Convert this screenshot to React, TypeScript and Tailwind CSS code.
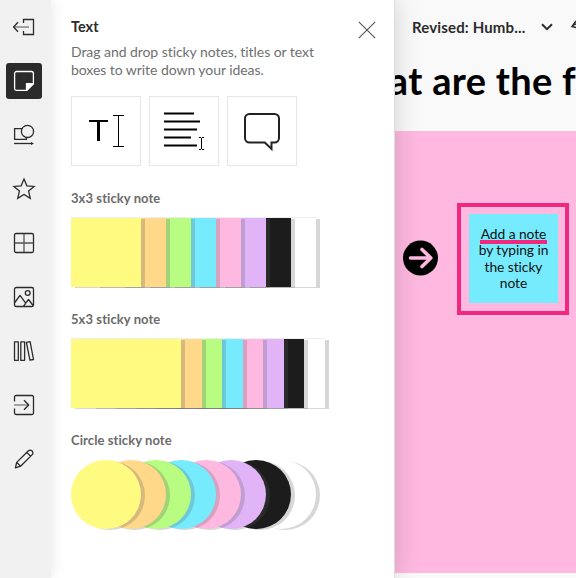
import type { ReactNode } from "react";

const COLORS = ["#fffa80", "#ffd88a", "#b8fc82", "#76ebfe", "#ffb8e0", "#e1b4f8", "#1c1c1c", "#ffffff"];

function Glyph({ children, light = false }: { children: ReactNode; light?: boolean }) {
  return (
    <svg
      width="24"
      height="24"
      viewBox="0 0 24 24"
      fill="none"
      stroke={light ? "#ffffff" : "#2b2b2b"}
      strokeWidth="1.3"
      strokeLinejoin="round"
    >
      {children}
    </svg>
  );
}

const TOOLS: { name: string; active?: boolean; icon: ReactNode }[] = [
  {
    name: "Exit",
    icon: (
      <>
        <path d="M11.5 8V4.5h10v15h-10V16" strokeLinejoin="miter" />
        <path d="M1.8 12H17" stroke="#777" />
        <path d="M6 7.2L1.6 12 6 16.8" />
      </>
    ),
  },
  {
    name: "Text",
    active: true,
    icon: (
      <>
        <path d="M4.6 2.5h14.8a2 2 0 0 1 2 2v10.2l-6.6 6.7H4.6a2 2 0 0 1-2-2V4.5a2 2 0 0 1 2-2z" />
        <path d="M14.5 21.4v-6.8h6.9z" fill="#fff" />
      </>
    ),
  },
  {
    name: "Shapes",
    icon: (
      <>
        <path d="M10 5.6H2.6v10.8h11.8v-1.9" strokeLinejoin="miter" />
        <circle cx="15.5" cy="8.4" r="6.1" />
        <path d="M2 20.5h18" />
        <path d="M19 18.9l3 1.6-3 1.6z" fill="#2b2b2b" stroke="none" />
      </>
    ),
  },
  {
    name: "Icons",
    icon: <path d="M12 2.1l2.9 6.7 7.2.6-5.5 4.7 1.7 7.2-6.3-3.8-6.3 3.8 1.7-7.2L1.9 9.4l7.2-.6z" strokeLinejoin="miter" />,
  },
  {
    name: "Frameworks",
    icon: (
      <>
        <rect x="2.5" y="2.5" width="19" height="19" rx="1.7" />
        <path d="M12 3v18M3 12h18" stroke="#555" />
      </>
    ),
  },
  {
    name: "Images",
    icon: (
      <>
        <rect x="2.5" y="2.5" width="19" height="19" rx="1.7" />
        <circle cx="15.7" cy="8" r="2.4" />
        <path d="M2.8 17.5L8 10.4l5.7 7.7 2.8-3.6 5 6.5M11.7 21l2-2.8" />
      </>
    ),
  },
  {
    name: "Library",
    icon: <path d="M2.5 2.8h3.8v18.5H2.5zM8.8 2.8h3.8v18.5H8.8zM14.4 3.3l3.7-.6 3.4 17.8-3.6.7z" />,
  },
  {
    name: "Import",
    icon: (
      <>
        <path d="M2.5 8.6V4.2a1.7 1.7 0 0 1 1.7-1.7h15.6a1.7 1.7 0 0 1 1.7 1.7v15.6a1.7 1.7 0 0 1-1.7 1.7H4.2a1.7 1.7 0 0 1-1.7-1.7v-4.4" />
        <path d="M2 12h14.5" stroke="#777" />
        <path d="M12 7.3l4.7 4.7-4.7 4.7" />
      </>
    ),
  },
  {
    name: "Draw",
    icon: (
      <path d="M3.4 20.8l1.3-5.4L16.4 3.8a2.4 2.4 0 0 1 3.4 0l.4.4a2.4 2.4 0 0 1 0 3.4L8.6 19.2l-5.2 1.6zM14.8 5.4l3.8 3.8M4.7 15.4l3.9 3.8" />
    ),
  },
];

function Rail() {
  return (
    <nav className="relative z-20 flex w-[51px] shrink-0 flex-col gap-[18px] bg-[#f1f1f1] pt-[9px] pl-1.5 shadow-[0_0_14px_rgba(0,0,0,0.1)]">
      {TOOLS.map((tool) => (
        <button
          key={tool.name}
          aria-label={tool.name}
          className={
            tool.active
              ? "flex h-9 w-9 items-center justify-center rounded-[3px] bg-[#2b2b2b]"
              : "flex h-9 w-9 items-center justify-center"
          }
        >
          <Glyph light={tool.active}>{tool.icon}</Glyph>
        </button>
      ))}
    </nav>
  );
}

type Shape = "square" | "wide" | "circle";

const NOTE_CLASSES: Record<Shape, string> = {
  square: "h-[69px] w-[70px] not-first:-ml-[45px]",
  wide: "h-[69px] w-[110px] not-first:-ml-[89.5px]",
  circle: "h-[69px] w-[70px] rounded-full not-first:-ml-[45px]",
};

const STACK_CLASSES: Record<Shape, string> = {
  square: "isolate mt-[10px] flex w-[245px] border-t border-[#eeeeee]",
  wide: "isolate mt-[10px] flex w-[254px] border-t border-[#eeeeee]",
  circle: "isolate mt-[11px] flex",
};

function Section({ title, shape }: { title: string; shape: Shape }) {
  return (
    <section className="h-[121px]">
      <h3 className="h-[18px] text-[13px] leading-[18px] font-bold tracking-[0.08px] whitespace-nowrap text-[#6b6b6b]">
        {title}
      </h3>
      <div className={STACK_CLASSES[shape]}>
        {COLORS.map((color, i) => (
          <div
            key={color}
            className={`relative shrink-0 shadow-[4px_1px_0_rgba(86,86,86,0.24)] ${NOTE_CLASSES[shape]}`}
            style={{ backgroundColor: color, zIndex: COLORS.length - i }}
          />
        ))}
      </div>
    </section>
  );
}

function Panel() {
  return (
    <aside className="relative z-10 flex w-[344px] shrink-0 flex-col border-r border-[#dddddd] bg-white pl-5 shadow-[0_0_24px_rgba(0,0,0,0.17)]">
      <header className="flex h-24 justify-between pt-[18px] pr-[17px]">
        <div>
          <h2 className="text-[14.5px] leading-[18px] font-bold text-[#2b2b2b]">Text</h2>
          <p className="mt-[7px] text-[14px] leading-[18px] tracking-[-0.06px] whitespace-nowrap text-[#6f6f6f]">
            Drag and drop sticky notes, titles or text
            <br />
            boxes to write down your ideas.
          </p>
        </div>
        <svg className="mt-[2px]" width="20" height="20" viewBox="0 0 20 20" stroke="#555" strokeWidth="1.1">
          <path d="M1.8 1.8l16.4 16.4M18.2 1.8L1.8 18.2" />
        </svg>
      </header>
      <div className="mb-[23px] flex gap-2">
        <div className="flex h-[70px] w-[70px] border border-[#e6e6e6]">
          <svg width="68" height="68" viewBox="72 97 68 68" fill="none" stroke="#000">
            <path d="M89 121h19" strokeWidth="2" />
            <path d="M98.5 121v20" strokeWidth="3" />
            <path d="M113 115.5h11M118.5 115.5v31M113 146.5h11" />
          </svg>
        </div>
        <div className="flex h-[70px] w-[70px] border border-[#e6e6e6]">
          <svg width="68" height="68" viewBox="150 97 68 68" fill="none" stroke="#000">
            <path d="M164 113.5h30M164 121.5h36M164 129.5h33M164 137.5h27M164 145.5h33" strokeWidth="2" />
            <path d="M199 137.5h2M202 137.5h2M201.5 138v11M199 149.5h2M202 149.5h2" />
          </svg>
        </div>
        <div className="flex h-[70px] w-[70px] border border-[#e6e6e6]">
          <svg width="68" height="68" viewBox="228 97 68 68" fill="none" stroke="#222" strokeWidth="2">
            <path d="M249.5 114h25a4.5 4.5 0 0 1 4.5 4.5v19.5a4.5 4.5 0 0 1-4.5 4.5h-3v6.5l-6.7-6.5h-15.3a4.5 4.5 0 0 1-4.5-4.5v-19.5a4.5 4.5 0 0 1 4.5-4.5z" />
          </svg>
        </div>
      </div>
      <Section title="3x3 sticky note" shape="square" />
      <Section title="5x3 sticky note" shape="wide" />
      <Section title="Circle sticky note" shape="circle" />
    </aside>
  );
}

function Board() {
  return (
    <main className="relative min-w-0 flex-1 overflow-hidden bg-[#f9f9f9]">
      <div className="absolute top-[131px] left-0 h-[442px] w-full bg-[#ffb8e0]" />
      <h1 className="absolute top-[56px] right-0 text-[38px] leading-[48px] font-bold tracking-[0.3px] whitespace-nowrap text-black">
        at are the f
      </h1>
      <svg className="absolute top-[240px] left-2" width="36" height="36" viewBox="403 240 36 36" fill="none">
        <circle cx="420.5" cy="258" r="17.5" fill="#000" />
        <path
          d="M410.5 258h20M422 249.5l8.8 8.5-8.8 8.5"
          stroke="#ffb8e0"
          strokeWidth="3.6"
          strokeLinecap="round"
          strokeLinejoin="round"
        />
      </svg>
      <div className="absolute top-[203px] left-[62px] flex h-[111.5px] w-[111.5px] border-4 border-[#f0287f] pt-[7px] pl-2">
        <div className="h-[89px] w-[89px] bg-[#76ebfe] pt-3 text-center text-[13.8px] leading-[16.3px] tracking-[-0.06px] whitespace-nowrap text-[#111]">
          Add a note
          <br />
          by typing in
          <br />
          the sticky
          <br />
          note
        </div>
      </div>
      <div className="absolute top-[240px] left-[85px] h-1 w-[67px] bg-[#f0287f]" />
      <header className="relative flex h-[54px] items-center pl-[17px]">
        <span className="w-[114px] shrink-0 text-[15px] leading-5 font-bold tracking-[0.15px] whitespace-nowrap text-[#2b2b2b]">
          Revised: Humb...
        </span>
        <svg
          className="ml-[15px] shrink-0"
          width="12"
          height="8"
          viewBox="0 0 12 8"
          fill="none"
          stroke="#2b2b2b"
          strokeWidth="2"
        >
          <path d="M1 1.2l5 5 5-5" />
        </svg>
        <svg
          className="ml-[17px] shrink-0"
          width="16"
          height="16"
          viewBox="0 0 16 16"
          fill="none"
          stroke="#2b2b2b"
          strokeWidth="1.5"
        >
          <path d="M6 2L2 7.5l5.5 1.5M2 7.5C5 3.5 12 4 13.5 10" />
        </svg>
      </header>
    </main>
  );
}

export default function App() {
  return (
    <div className="flex h-[578px] w-[576px] overflow-hidden bg-white font-['Lato',sans-serif] [font-variant-ligatures:none]">
      <Rail />
      <Panel />
      <Board />
    </div>
  );
}
